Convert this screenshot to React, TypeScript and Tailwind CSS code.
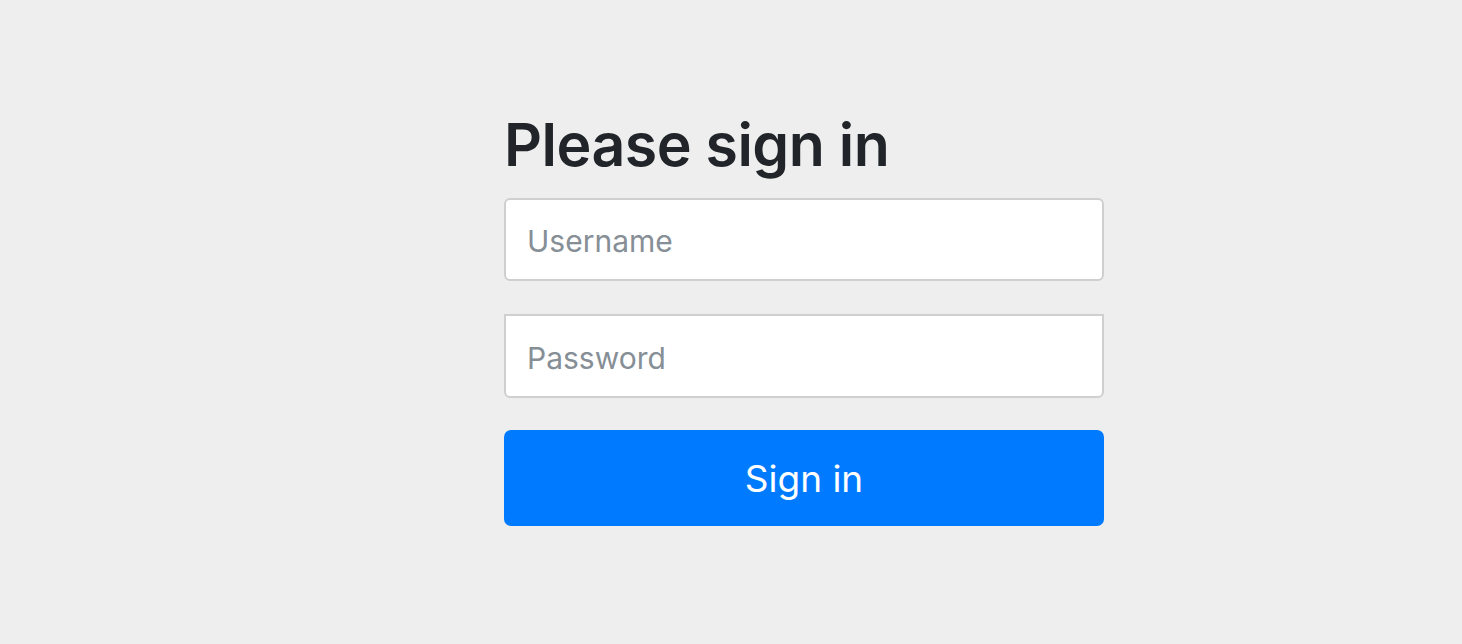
import * as React from 'react';

export default function App() {
    return (
        <div className="min-h-screen bg-[#eeeeee] pl-[504px] pt-[110px]" style={{ fontFamily: 'Inter, "Noto Sans", sans-serif' }}>
            <form className="w-[600px] flex flex-col" onSubmit={(e) => e.preventDefault()}>
                {/* tieu de */}
                <h2 className="text-[59px] leading-[1.2] font-semibold text-[#212529] tracking-[-0.5px] mb-[17px]">
                    Please sign in
                </h2>
                <input
                    type="text"
                    placeholder="Username"
                    className="h-[83px] w-full bg-white border-2 border-[#cfcfcf] rounded-[6px] px-[21px] pt-[4px] text-[30px] text-[#495057] placeholder:text-[#868e96] outline-none"
                />
                <input
                    type="password"
                    placeholder="Password"
                    className="mt-[33px] h-[84px] w-full bg-white border-2 border-[#cfcfcf] rounded-b-[6px] px-[21px] pt-[4px] text-[30px] text-[#495057] placeholder:text-[#868e96] outline-none"
                />
                <button
                    type="submit"
                    className="mt-[32px] h-[96px] w-full bg-[#007bff] text-white text-[37px] pt-[2px] rounded-[7px]"
                >
                    Sign in
                </button>
            </form>
        </div>
    );
}
